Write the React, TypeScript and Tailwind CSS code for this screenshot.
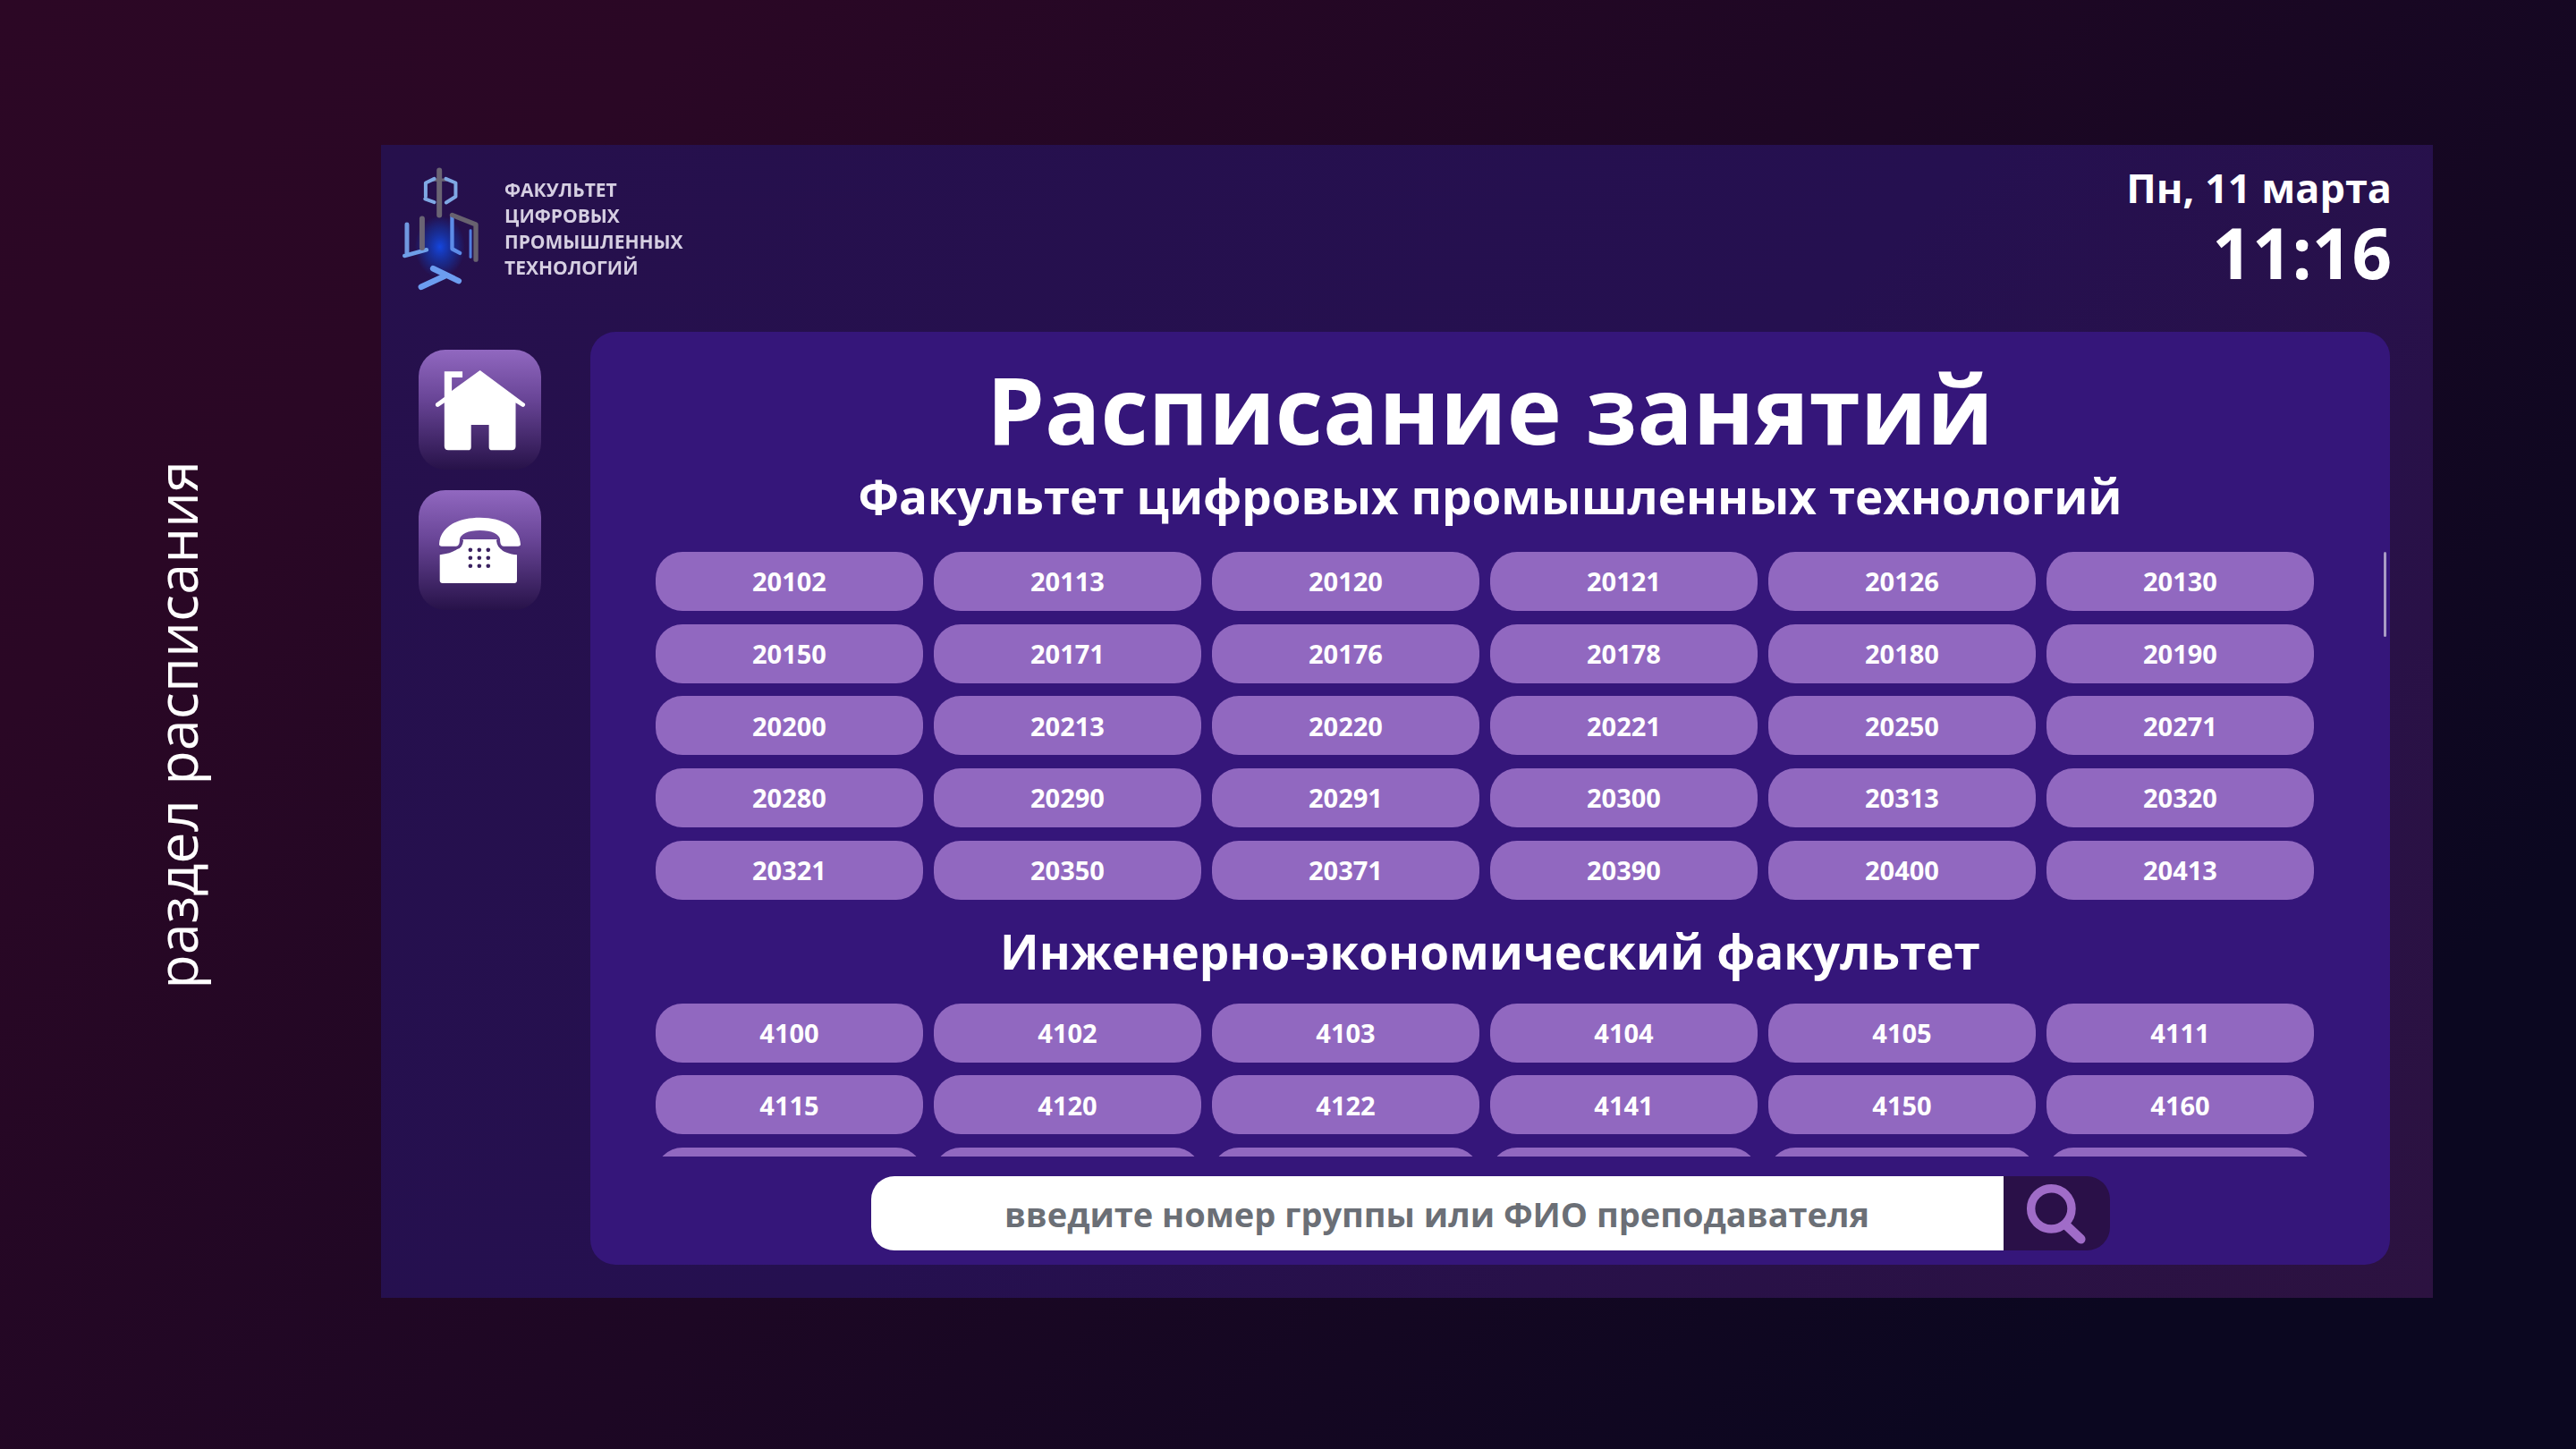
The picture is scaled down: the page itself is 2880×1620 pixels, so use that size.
const facultyGroups = [
  "20102", "20113", "20120", "20121", "20126", "20130",
  "20150", "20171", "20176", "20178", "20180", "20190",
  "20200", "20213", "20220", "20221", "20250", "20271",
  "20280", "20290", "20291", "20300", "20313", "20320",
  "20321", "20350", "20371", "20390", "20400", "20413",
];

// third row is cut off by the scroll area, only the tops of the pills show
const econGroups = [
  "4100", "4102", "4103", "4104", "4105", "4111",
  "4115", "4120", "4122", "4141", "4150", "4160",
  "", "", "", "", "", "",
];

function GroupGrid({ groups }: { groups: string[] }) {
  return (
    <div className="grid grid-cols-[repeat(6,299px)] gap-x-[12px] gap-y-[14.7px]">
      {groups.map((g, i) => (
        <div
          key={i}
          className="flex h-[66px] items-center justify-center rounded-[30px] bg-[#9168c0] text-[29px] font-bold text-white"
        >
          {g}
        </div>
      ))}
    </div>
  );
}

function Logo() {
  return (
    <svg viewBox="80 105 280 420" className="h-[140px] w-[93px] shrink-0 blur-[0.6px]">
      <defs>
        <radialGradient id="glow">
          <stop offset="0%" stopColor="#1546e0" />
          <stop offset="60%" stopColor="#123ab0" stopOpacity="0.55" />
          <stop offset="100%" stopColor="#123ab0" stopOpacity="0" />
        </radialGradient>
      </defs>
      <ellipse cx="215" cy="375" rx="85" ry="105" fill="url(#glow)" />
      <g fill="none" strokeLinecap="round" strokeLinejoin="round">
        <path d="M213 118V268" stroke="#6a6474" strokeWidth="18" />
        <path d="M190 150H236" stroke="#6a6474" strokeWidth="10" />
        <path d="M196 146 167 160V206M196 225 165 214M235 146 268 160V206L236 226" stroke="#7fa8e4" strokeWidth="12" />
        <path d="M104 300V395" stroke="#7098e0" strokeWidth="15" />
        <path d="M96 405 170 385" stroke="#6f9fe8" strokeWidth="14" />
        <path d="M155 280V378" stroke="#6a6474" strokeWidth="18" />
        <path d="M256 270V382L282 396" stroke="#5d8ce8" strokeWidth="13" />
        <path d="M256 268 336 300V418" stroke="#68626f" strokeWidth="16" />
        <path d="M318 320V410" stroke="#4f7de0" strokeWidth="9" />
        <path d="M192 448 278 490" stroke="#6c9df0" strokeWidth="20" />
        <path d="M152 510 230 474" stroke="#6c9df0" strokeWidth="20" />
      </g>
    </svg>
  );
}

function HomeIcon() {
  return (
    <svg viewBox="140 130 312 280" className="h-[93px] w-[104px]">
      <path
        fill="#fff"
        d="M295 136 446 248c3 4-1 13-9 11l-22-14V392c0 8-5 13-13 13H335c-6 0-10-3-10-10V320H265v75c0 7-4 10-10 10H188c-8 0-13-5-13-13V245l-20 14c-8 2-13-7-8-12L175 226V140H236V160H200V205Z"
      />
    </svg>
  );
}

function PhoneIcon() {
  return (
    <svg viewBox="150 620 280 232" className="h-[77px] w-[93px]">
      <path
        fill="#fff"
        d="M153 715C155 660 210 625 290 625S425 660 427 715C427 722 420 722 405 722H375C362 722 358 715 358 698 355 680 330 668 290 668S225 680 222 698C222 715 218 722 205 722H175C160 722 153 722 153 715Z"
      />
      <path
        fill="#fff"
        d="M232 698H348C350 725 362 745 415 750V838C415 843 411 846 406 846H164C159 846 155 843 155 838V750C208 745 230 725 232 698Z"
      />
      <path d="M153 728H212C222 728 230 718 232 700M427 728H368C358 728 350 718 348 700" fill="none" stroke="#5a3a86" strokeWidth="5" />
      <g fill="#3a2160">
        {[734, 761, 788].map((y) =>
          [258, 288, 318].map((x) => <circle key={`${x}-${y}`} cx={x} cy={y} r="7" />)
        )}
      </g>
    </svg>
  );
}

function SideButton({ children }: { children: React.ReactNode }) {
  return (
    <div className="flex h-[134px] w-[137px] items-center justify-center rounded-[30px] bg-[linear-gradient(to_bottom,#9168c0_0%,#6a4698_40%,#271249_100%)]">
      {children}
    </div>
  );
}

export default function App() {
  return (
    <div className="flex h-[1620px] w-[2880px] items-start bg-[linear-gradient(135deg,#2c0725_0%,#2a0725_18%,#1d0724_50%,#0b0720_85%)] pt-[162px] font-['Open_Sans',sans-serif] text-white">
      <div className="flex h-[1296px] w-[392px] items-center justify-center">
        <span className="rotate-180 text-[63px] leading-none [writing-mode:vertical-rl]">
          раздел расписания
        </span>
      </div>

      <div className="ml-[34px] flex h-[1289px] w-[2294px] flex-col bg-[linear-gradient(135deg,#26104c_0%,#251050_50%,#2c1240_100%)]">
        <header className="flex h-[209px] justify-between pl-[21px] pr-[46px] pt-[19px]">
          <div className="flex items-start gap-[24px] pt-[5px]">
            <Logo />
            <div className="pt-[12px] text-[21px] font-bold leading-[29px] text-[#d6cfe2] blur-[0.5px]">
              <div>ФАКУЛЬТЕТ</div>
              <div>ЦИФРОВЫХ</div>
              <div>ПРОМЫШЛЕННЫХ</div>
              <div>ТЕХНОЛОГИЙ</div>
            </div>
          </div>
          <div className="text-right">
            <div className="text-[45px] font-bold leading-[58px]">Пн, 11 марта</div>
            <div className="text-[78px] font-bold leading-[87px]">11:16</div>
          </div>
        </header>

        <div className="flex">
          <aside className="flex w-[234px] flex-col gap-[23px] pl-[42px] pt-[20px]">
            <SideButton>
              <HomeIcon />
            </SideButton>
            <SideButton>
              <PhoneIcon />
            </SideButton>
          </aside>

          <main className="flex h-[1043px] w-[2012px] flex-col items-center rounded-[28px] bg-[#35167a]">
            <h1 className="mt-[24px] text-[103.5px] font-bold leading-[124px]">Расписание занятий</h1>
            <h2 className="mt-[1px] text-[53px] font-bold leading-[70px]">
              Факультет цифровых промышленных технологий
            </h2>

            <div className="relative mt-[27px] h-[676px] w-full shrink-0 overflow-hidden pl-[73px]">
              <GroupGrid groups={facultyGroups} />
              <div className="flex h-[116px] w-[1866px] items-center justify-center text-[53px] font-bold">
                Инженерно-экономический факультет
              </div>
              <GroupGrid groups={econGroups} />
              <div className="absolute left-[2005px] top-0 h-[95px] w-[3px] rounded-full bg-[#a89cc4]" />
            </div>

            <div className="mt-[22px] flex h-[83px] w-[1385px]">
              <div className="flex flex-1 items-center justify-center rounded-l-[26px] bg-white pt-[2px] text-[38px] font-bold text-[#6b6f76]">
                введите номер группы или ФИО преподавателя
              </div>
              <div className="flex w-[119px] items-center justify-center rounded-r-[26px] bg-[#2a1048]">
                <svg viewBox="0 0 72 72" className="h-[68px] w-[68px]" fill="none" stroke="#a06cc8" strokeLinecap="round">
                  <circle cx="30" cy="30" r="24" strokeWidth="10" />
                  <path d="M47 49 65 66" strokeWidth="11" />
                </svg>
              </div>
            </div>
          </main>
        </div>
      </div>
    </div>
  );
}
